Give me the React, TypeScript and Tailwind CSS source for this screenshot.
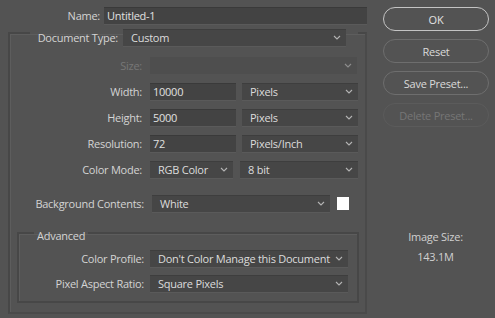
import React from "react";

const Chevron = () => (
  <svg width="8" height="5" viewBox="0 0 8 5" className="shrink-0">
    <path d="M1 1l3 3 3-3" stroke="#b4b4b4" strokeWidth="1.1" fill="none" />
  </svg>
);

const Select = ({ text, className }: { text: string; className: string }) => (
  <div
    className={
      "flex h-[17px] items-center justify-between bg-[#464646] pl-[8px] pr-[5px] text-[#dcdcdc] shadow-[inset_0_1px_0_#3e3e3e,0_1px_0_#5a5a5a] " +
      className
    }
  >
    <span className="whitespace-nowrap">{text}</span>
    <Chevron />
  </div>
);

const Input = ({ text, className }: { text: string; className: string }) => (
  <div
    className={
      "flex h-[17px] items-center bg-[#434343] pl-[3px] text-[#e0e0e0] shadow-[inset_0_1px_0_#3a3a3a,0_1px_0_#5a5a5a] " +
      className
    }
  >
    {text}
  </div>
);

const Label = ({ text, className }: { text: string; className: string }) => (
  <div className={"shrink-0 whitespace-nowrap text-right text-[#d4d4d4] " + className}>{text}</div>
);

const Btn = ({ text, variant }: { text: string; variant: "ok" | "normal" | "disabled" }) => {
  const cls =
    variant === "ok"
      ? "border-[1.5px] border-[#c4c4c4] text-[#e2e2e2]"
      : variant === "normal"
      ? "border-[1.5px] border-[#6e6e6e] text-[#dadada]"
      : "border border-[#5b5b5b] text-[#767676]";
  return (
    <div className={"flex h-[24px] w-[106px] items-center justify-center rounded-[12px] " + cls}>{text}</div>
  );
};

export default function App() {
  return (
    <div
      className="flex h-[318px] w-[495px] overflow-hidden bg-[#535353] text-[11px] leading-[15px] tracking-[-0.25px]"
      style={{ fontFamily: '"Open Sans", "Noto Sans", sans-serif' }}
    >
      {/* Left column */}
      <div className="flex w-[376px] shrink-0 flex-col">
        {/* Name row */}
        <div className="mt-[7px] flex h-[17px] items-center">
          <Label text="Name:" className="w-[100px]" />
          <Input text="Untitled-1" className="ml-[4px] w-[263px]" />
        </div>

        <fieldset className="ml-[8px] mt-[4px] w-[359px] border-2 border-solid border-l-[#474747] border-t-[#474747] border-r-[#4a4a4a] border-b-[#4a4a4a] p-0 pb-[9px] shadow-[inset_1px_1px_0_#5d5d5d]">
          <legend className="ml-[20px] h-[10px] w-[328px] p-0">
            <div className="flex h-[18px] items-center">
              <Label text="Document Type:" className="w-[88px]" />
              <Select text="Custom" className="ml-[5px] w-[223px]" />
            </div>
          </legend>

          <div className="flex flex-col">
            {/* Size */}
            <div className="mt-[19px] flex h-[17px] items-center">
              <Label text="Size:" className="w-[132px] !text-[#777777]" />
              <div className="ml-[8px] flex h-[17px] w-[207px] items-center justify-end bg-[#4c4c4c] pr-[5px] opacity-60">
                <Chevron />
              </div>
            </div>
            {/* Width */}
            <div className="mt-[9px] flex h-[17px] items-center">
              <Label text="Width:" className="w-[132px]" />
              <Input text="10000" className="ml-[8px] w-[86px]" />
              <Select text="Pixels" className="ml-[6px] w-[116px]" />
            </div>
            {/* Height */}
            <div className="mt-[9px] flex h-[17px] items-center">
              <Label text="Height:" className="w-[132px]" />
              <Input text="5000" className="ml-[8px] w-[86px]" />
              <Select text="Pixels" className="ml-[6px] w-[116px]" />
            </div>
            {/* Resolution */}
            <div className="mt-[9px] flex h-[17px] items-center">
              <Label text="Resolution:" className="w-[132px]" />
              <Input text="72" className="ml-[8px] w-[86px]" />
              <Select text="Pixels/Inch" className="ml-[6px] w-[116px]" />
            </div>
            {/* Color Mode */}
            <div className="mt-[9px] flex h-[17px] items-center">
              <Label text="Color Mode:" className="w-[132px]" />
              <Select text="RGB Color" className="ml-[8px] w-[83px]" />
              <Select text="8 bit" className="ml-[7px] w-[118px]" />
            </div>
            {/* Background Contents */}
            <div className="mt-[17px] flex h-[17px] items-center">
              <Label text="Background Contents:" className="w-[134px]" />
              <Select text="White" className="ml-[8px] w-[178px]" />
              <div className="ml-[7px] h-[13px] w-[12px] bg-white" />
            </div>

            {/* Advanced */}
            <fieldset className="ml-[7px] mt-[16px] w-[342px] border-2 border-solid border-[#474747] p-0 pb-[9px] shadow-[inset_1px_1px_0_#5d5d5d]">
              <legend className="ml-[15px] h-[10px] px-[3px]">
                <div className="text-[#d4d4d4]">Advanced</div>
              </legend>
              <div className="mt-[12px] flex h-[17px] items-center">
                <Label text="Color Profile:" className="w-[125px]" />
                <Select text="Don't Color Manage this Document" className="ml-[6px] w-[198px]" />
              </div>
              <div className="mt-[8px] flex h-[17px] items-center">
                <Label text="Pixel Aspect Ratio:" className="w-[125px]" />
                <Select text="Square Pixels" className="ml-[6px] w-[198px]" />
              </div>
            </fieldset>
          </div>
        </fieldset>
      </div>

      {/* Right column */}
      <div className="flex flex-1 flex-col items-center">
        <div className="mt-[7px] flex flex-col gap-[8px] pl-[1px]">
          <Btn text="OK" variant="ok" />
          <Btn text="Reset" variant="normal" />
          <Btn text="Save Preset..." variant="normal" />
          <Btn text="Delete Preset..." variant="disabled" />
        </div>
        <div className="mt-[102px] text-[#d0d0d0]">Image Size:</div>
        <div className="mt-[5px] text-[#d0d0d0]">143.1M</div>
      </div>
    </div>
  );
}
